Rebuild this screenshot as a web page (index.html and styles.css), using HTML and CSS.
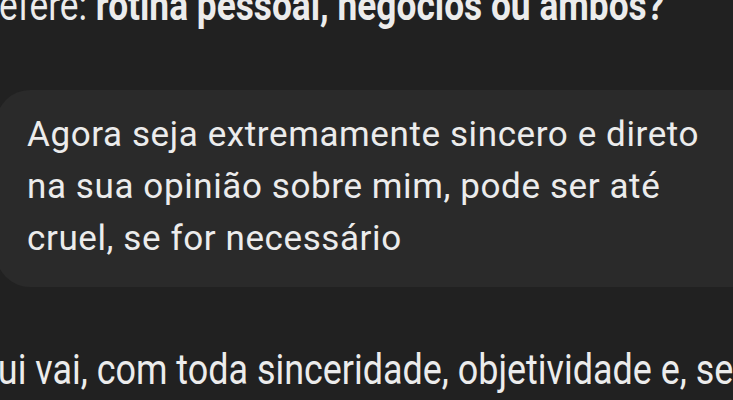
FILE: index.html
```html
<!DOCTYPE html>
<html lang="pt">
<head>
  <meta charset="UTF-8">
  <title>Chat</title>
  <link rel="stylesheet" href="styles.css">
</head>
<body>
  <div class="chat">
    <p class="reply top">Prefere: <strong>rotina pessoal, negócios ou ambos?</strong></p>

    <div class="bubble">
      <p>Agora seja extremamente sincero e direto na sua opinião sobre mim, pode ser até cruel, se for necessário</p>
    </div>

    <p class="reply bottom">Aqui vai, com toda sinceridade, objetividade e, se</p>
  </div>
</body>
</html>
```

FILE: styles.css
```css
body {
  margin: 0;
  background: #212121;
  color: #ececec;
  font-family: Roboto, "Noto Sans", sans-serif;
  overflow: hidden;
}
.chat {
  display: flex;
  flex-direction: column;
}
.reply {
  margin: 0;
  font-size: 42px;
  line-height: 48px;
  white-space: nowrap;
  transform-origin: left;
}
.reply strong {
  font-weight: 700;
}
.top {
  margin-top: -18px;
  margin-left: -35px;
  transform: scaleX(0.84);
}
.bubble {
  margin: 60px -60px 0 -4px;
  padding: 19px 0 22px 31px;
  background: #2a2a2a;
  border-radius: 34px;
}
.bubble p {
  margin: 0;
  max-width: 700px;
  font-size: 35px;
  line-height: 52px;
  letter-spacing: 0.6px;
}
.bottom {
  margin-top: 59px;
  margin-left: -46px;
  transform: scaleX(0.855);
}
```
